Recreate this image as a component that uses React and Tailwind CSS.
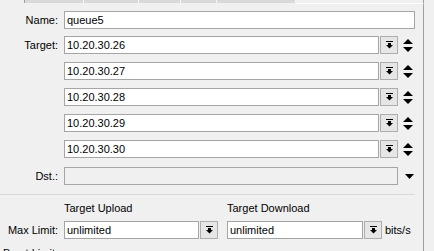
import React from "react";

const DropIcon = () => (
  <svg width="7" height="8" viewBox="0 0 7 8" className="block">
    <rect x="0" y="0" width="7" height="1" fill="#000" />
    <rect x="2" y="2" width="3" height="2" fill="#000" />
    <polygon points="0,4 7,4 3.5,7.5" fill="#000" />
  </svg>
);

const DropButton = () => (
  <div className="ml-[1px] w-[18px] h-[18px] border border-[#adadad] bg-[#e6e6e6] flex items-center justify-center shrink-0">
    <DropIcon />
  </div>
);

const UpDown = () => (
  <svg width="10" height="13" viewBox="0 0 10 13" className="block ml-[5px]">
    <polygon points="0,5 10,5 5,0" fill="#000" />
    <polygon points="0,8 10,8 5,13" fill="#000" />
  </svg>
);

const Label = ({ children }) => (
  <div className="w-[58px] text-right shrink-0 whitespace-nowrap">{children}</div>
);

const Input = ({ value, w, disabled }) => (
  <div
    className={`${w} h-[18px] border border-[#a5a5a5] ${
      disabled ? "bg-[#f0f0f0]" : "bg-white"
    } pl-[2px] leading-[16px] whitespace-nowrap overflow-hidden shrink-0`}
  >
    {value}
  </div>
);

const targets = ["10.20.30.27", "10.20.30.28", "10.20.30.29", "10.20.30.30"];

export default function App() {
  return (
    <div
      className="w-[434px] h-[251px] bg-[#f0f0f0] overflow-hidden text-[11px] text-black"
      style={{ fontFamily: '"Liberation Sans", Arial, sans-serif' }}
    >
      <div className="flex h-[4px] w-[424px]">
        <div className="w-[24px] shrink-0" />
        <div className="w-[59px] h-[3px] bg-[#d9d9d9] border-l border-[#a0a0a0]" />
        <div className="w-[55px] h-[3px] bg-[#d9d9d9] border-l border-[#f4f4f4]" />
        <div className="w-[42px] h-[3px] bg-[#d9d9d9] border-l border-[#f4f4f4]" />
        <div className="w-[36px] h-[3px] bg-[#d9d9d9] border-l border-[#f4f4f4]" />
        <div className="w-[80px] h-[3px] bg-[#d9d9d9] border-l border-r border-[#f4f4f4]" />
        <div className="flex-1 h-[4px] border-b border-white border-r border-r-[#a0a0a0]" />
      </div>
      <div className="w-[424px] h-[247px] border-r border-[#a0a0a0] pt-[7px]">
        <div className="flex items-center h-[18px]">
          <Label>Name:</Label>
          <div className="ml-[6px]">
            <Input value="queue5" w="w-[351px]" />
          </div>
        </div>
        <div className="flex items-center h-[18px] mt-[7px]">
          <Label>Target:</Label>
          <div className="ml-[6px] flex items-center">
            <Input value="10.20.30.26" w="w-[315px]" />
            <DropButton />
            <UpDown />
          </div>
        </div>
        {targets.map((t) => (
          <div key={t} className="flex items-center h-[18px] mt-[8px]">
            <Label></Label>
            <div className="ml-[6px] flex items-center">
              <Input value={t} w="w-[315px]" />
              <DropButton />
              <UpDown />
            </div>
          </div>
        ))}
        <div className="flex items-center h-[18px] mt-[9px]">
          <Label>Dst.:</Label>
          <div className="ml-[6px] flex items-center">
            <Input value="" w="w-[334px]" disabled />
            <svg width="9" height="5" viewBox="0 0 9 5" className="block ml-[7px]">
              <polygon points="0,0 9,0 4.5,5" fill="#000" />
            </svg>
          </div>
        </div>
        <div className="mt-[9px] w-[415px] h-px bg-[#d9d9d9]" />
        <div className="flex mt-[6px] h-[14px] leading-[14px]">
          <div className="w-[64px] shrink-0" />
          <div className="w-[163px] shrink-0">Target Upload</div>
          <div>Target Download</div>
        </div>
        <div className="flex items-center h-[18px] mt-[6px]">
          <Label>Max Limit:</Label>
          <div className="ml-[6px] flex items-center w-[163px] shrink-0">
            <Input value="unlimited" w="w-[135px]" />
            <DropButton />
          </div>
          <div className="flex items-center">
            <Input value="unlimited" w="w-[136px]" />
            <DropButton />
            <span className="ml-[3px]">bits/s</span>
          </div>
        </div>
        <div className="flex items-center h-[18px] mt-[5px]">
          <Label>Burst Limit:</Label>
        </div>
      </div>
    </div>
  );
}
